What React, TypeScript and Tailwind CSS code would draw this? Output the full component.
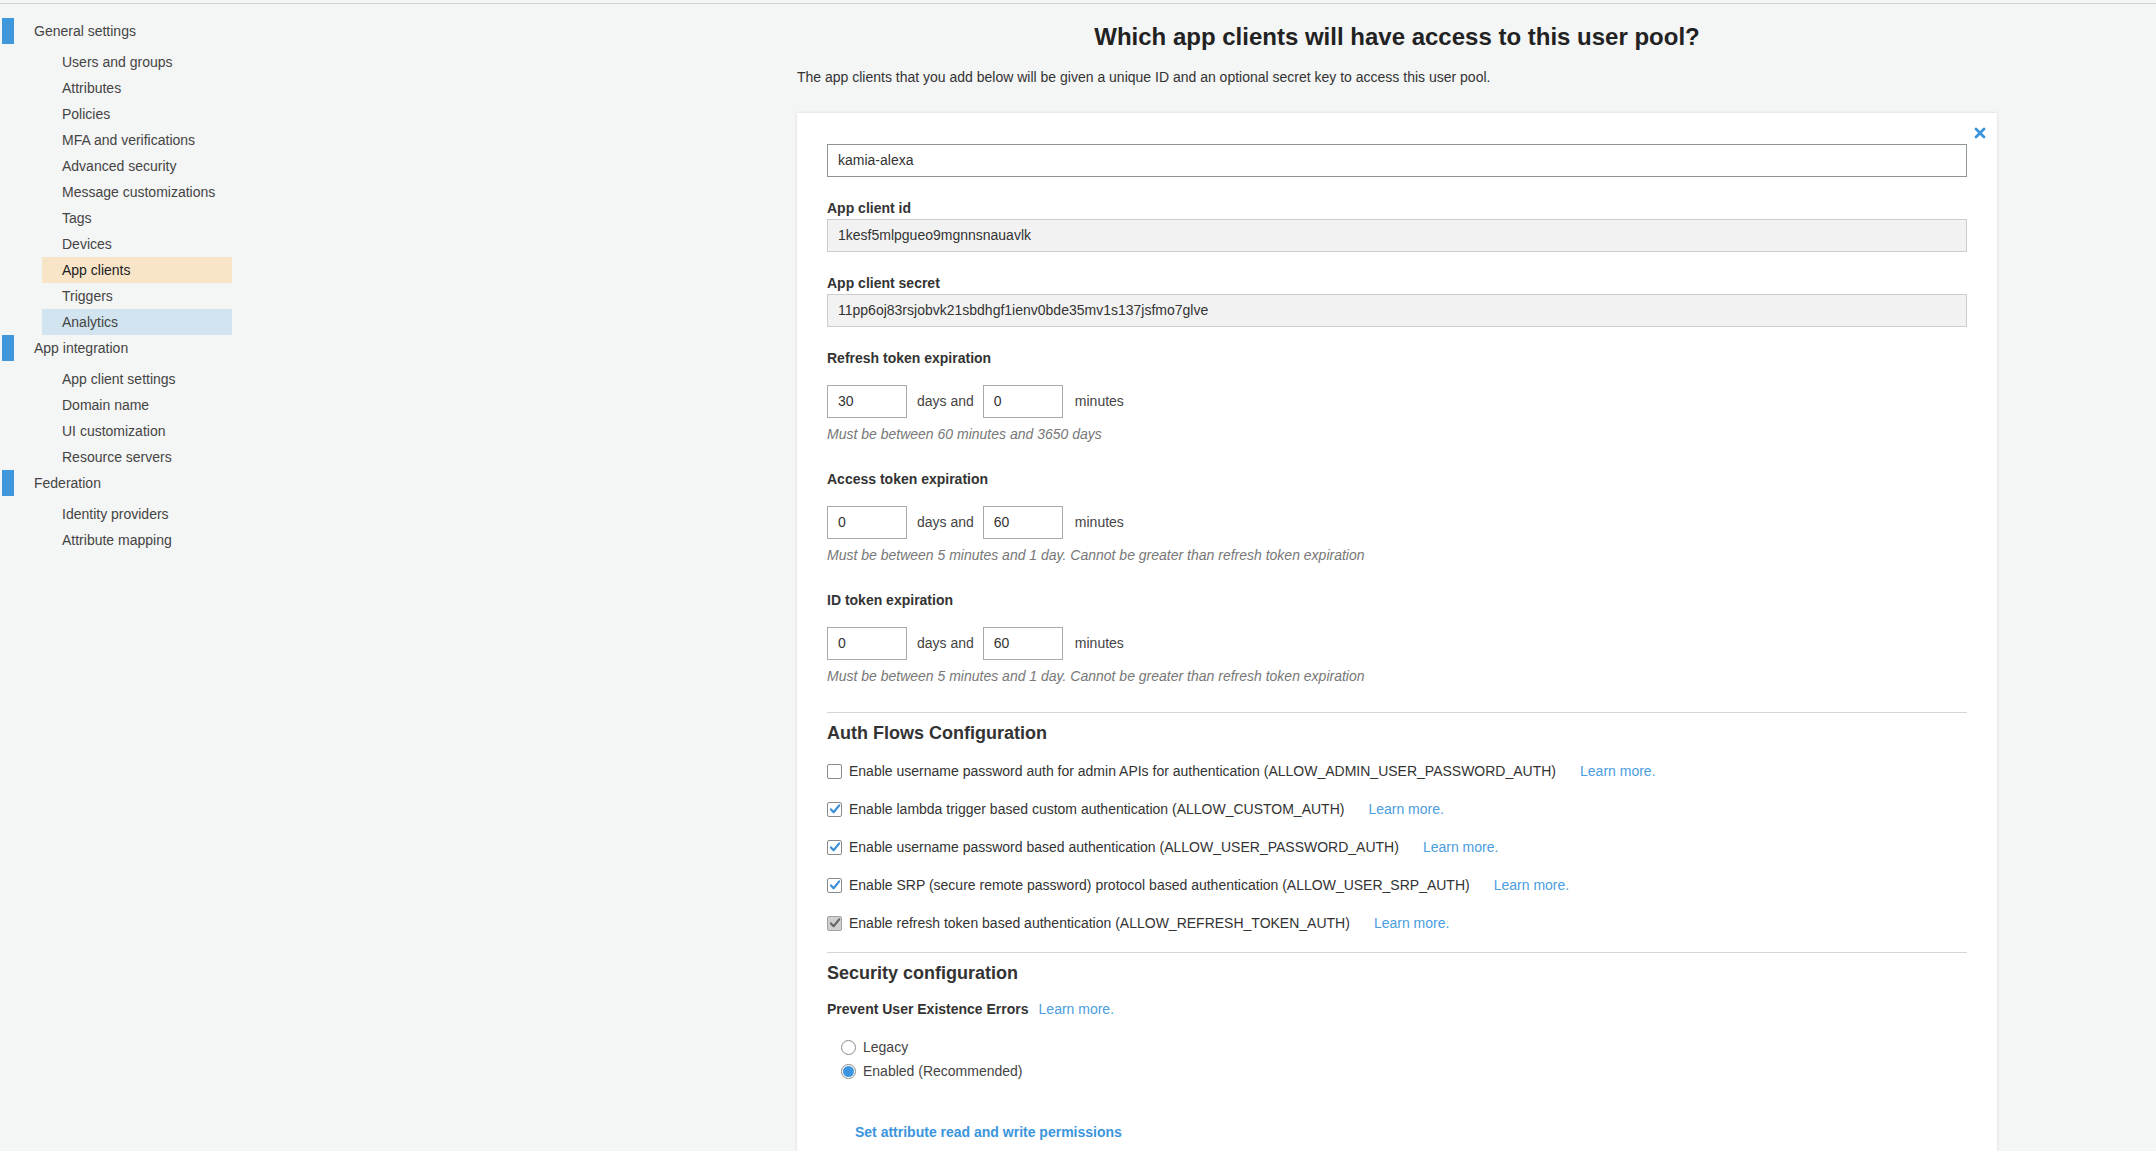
import { Fragment } from 'react'

const SIDEBAR = [
  {
    title: 'General settings',
    items: ['Users and groups', 'Attributes', 'Policies', 'MFA and verifications', 'Advanced security', 'Message customizations', 'Tags', 'Devices', 'App clients', 'Triggers', 'Analytics'],
  },
  {
    title: 'App integration',
    items: ['App client settings', 'Domain name', 'UI customization', 'Resource servers'],
  },
  {
    title: 'Federation',
    items: ['Identity providers', 'Attribute mapping'],
  },
]

const EXPIRATIONS = [
  { label: 'Refresh token expiration', days: '30', minutes: '0', help: 'Must be between 60 minutes and 3650 days' },
  { label: 'Access token expiration', days: '0', minutes: '60', help: 'Must be between 5 minutes and 1 day. Cannot be greater than refresh token expiration' },
  { label: 'ID token expiration', days: '0', minutes: '60', help: 'Must be between 5 minutes and 1 day. Cannot be greater than refresh token expiration' },
]

type FlowState = 'off' | 'on' | 'locked'

const AUTH_FLOWS: { text: string; state: FlowState }[] = [
  { text: 'Enable username password auth for admin APIs for authentication (ALLOW_ADMIN_USER_PASSWORD_AUTH)', state: 'off' },
  { text: 'Enable lambda trigger based custom authentication (ALLOW_CUSTOM_AUTH)', state: 'on' },
  { text: 'Enable username password based authentication (ALLOW_USER_PASSWORD_AUTH)', state: 'on' },
  { text: 'Enable SRP (secure remote password) protocol based authentication (ALLOW_USER_SRP_AUTH)', state: 'on' },
  { text: 'Enable refresh token based authentication (ALLOW_REFRESH_TOKEN_AUTH)', state: 'locked' },
]

function Checkbox({ state }: { state: FlowState }) {
  if (state === 'off') {
    return <span className="w-[15px] h-[15px] border border-[#8a8a8a] rounded-[2px] bg-white shrink-0" />
  }
  const locked = state === 'locked'
  return (
    <span
      className={`w-[15px] h-[15px] border rounded-[2px] shrink-0 flex items-center justify-center ${
        locked ? 'bg-[#cfcfcf] border-[#a3a3a3]' : 'bg-white border-[#8a8a8a]'
      }`}
    >
      <svg viewBox="0 0 12 12" className="w-[12px] h-[12px]">
        <path d="M2 6.4 L4.6 9.2 L10.2 2.4" fill="none" stroke={locked ? '#666' : '#3a8fd8'} strokeWidth="2.2" strokeLinecap="round" strokeLinejoin="round" />
      </svg>
    </span>
  )
}

function Radio({ checked }: { checked?: boolean }) {
  return (
    <span className="w-[15px] h-[15px] rounded-full border border-[#8a8a8a] bg-white shrink-0 flex items-center justify-center">
      {checked && <span className="w-[11px] h-[11px] rounded-full bg-[#3b95e0]" />}
    </span>
  )
}

function LearnMore() {
  return <span className="text-[#4a9de0] cursor-pointer">Learn more.</span>
}

export default function App() {
  return (
    <div className="min-h-screen bg-[#f4f5f5] font-['Liberation_Sans',Arial,sans-serif] text-[14px] text-[#333]">
      <div className="h-[3px]" />
      <div className="border-t border-[#d3d5d5] flex">
        {/* Sidebar */}
        <nav className="w-[240px] shrink-0 pt-[14px] text-[#444]">
          {SIDEBAR.map((group) => (
            <Fragment key={group.title}>
              <div className="flex items-center h-[26px] mb-[5px]">
                <span className="ml-[2px] w-[12px] h-full bg-[#3f98db]" />
                <span className="ml-[20px]">{group.title}</span>
              </div>
              {group.items.map((item) => (
                <div
                  key={item}
                  className={`ml-[42px] w-[190px] h-[26px] pl-[20px] flex items-center ${
                    item === 'App clients' ? 'bg-[#f8e5c8] text-[#222]' : item === 'Analytics' ? 'bg-[#d2e4ef]' : ''
                  }`}
                >
                  {item}
                </div>
              ))}
            </Fragment>
          ))}
        </nav>

        {/* Main */}
        <main className="ml-[557px] w-[1200px] shrink-0">
          <h1 className="mt-[19px] text-center text-[24px] leading-[28px] font-bold text-[#222]">
            Which app clients will have access to this user pool?
          </h1>
          <p className="mt-[16px] leading-[20px] text-[#333]">
            The app clients that you add below will be given a unique ID and an optional secret key to access this user pool.
          </p>

          <div className="relative mt-[26px] bg-white shadow-[0_0_3px_rgba(0,0,0,0.12)] px-[30px] pt-[31px] pb-[40px]">
            <button className="absolute top-[13px] right-[10px] w-[14px] h-[14px] flex items-center justify-center">
              <svg viewBox="0 0 12 12" className="w-[12px] h-[12px]">
                <path d="M2 2 L10 10 M10 2 L2 10" stroke="#3b95dc" strokeWidth="2.8" strokeLinecap="round" />
              </svg>
            </button>

            <div className="h-[33px] border border-[#8d9596] pl-[10px] flex items-center">kamia-alexa</div>

            <div className="mt-[21px] font-bold leading-[20px] mb-px">App client id</div>
            <div className="h-[33px] border border-[#cccccc] bg-[#f2f2f2] pl-[10px] flex items-center">1kesf5mlpgueo9mgnnsnauavlk</div>

            <div className="mt-[21px] font-bold leading-[20px] mb-px">App client secret</div>
            <div className="h-[33px] border border-[#cccccc] bg-[#f2f2f2] pl-[10px] flex items-center">
              11pp6oj83rsjobvk21sbdhgf1ienv0bde35mv1s137jsfmo7glve
            </div>

            {EXPIRATIONS.map((exp, i) => (
              <div key={exp.label} className={i === 0 ? 'mt-[21px]' : 'mt-[25px]'}>
                <div className="font-bold leading-[20px]">{exp.label}</div>
                <div className="mt-[17px] flex items-center">
                  <div className="w-[80px] h-[33px] border border-[#aaaaaa] pl-[10px] flex items-center">{exp.days}</div>
                  <span className="ml-[10px] mr-[9px] text-[#444]">days and</span>
                  <div className="w-[80px] h-[33px] border border-[#aaaaaa] pl-[10px] flex items-center">{exp.minutes}</div>
                  <span className="ml-[12px] text-[#444]">minutes</span>
                </div>
                <div className="mt-[6px] leading-[20px] italic text-[#777]">{exp.help}</div>
              </div>
            ))}

            <div className="mt-[26px] border-t border-[#d5d5d5]" />
            <h2 className="mt-[8px] text-[18px] leading-[24px] font-bold text-[#333]">Auth Flows Configuration</h2>
            <div className="mt-[16px] flex flex-col gap-[18px]">
              {AUTH_FLOWS.map((flow) => (
                <div key={flow.text} className="h-[20px] flex items-center">
                  <Checkbox state={flow.state} />
                  <span className="ml-[7px] text-[#333]">{flow.text}</span>
                  <span className="ml-[24px]">
                    <LearnMore />
                  </span>
                </div>
              ))}
            </div>

            <div className="mt-[19px] border-t border-[#d5d5d5]" />
            <h2 className="mt-[8px] text-[18px] leading-[24px] font-bold text-[#333]">Security configuration</h2>
            <div className="mt-[14px] leading-[20px] flex items-center">
              <span className="font-bold">Prevent User Existence Errors</span>
              <span className="ml-[10px]">
                <LearnMore />
              </span>
            </div>
            <div className="mt-[18px] pl-[14px] flex flex-col gap-[4px]">
              <label className="h-[20px] flex items-center gap-[7px] text-[#444]">
                <Radio />
                Legacy
              </label>
              <label className="h-[20px] flex items-center gap-[7px] text-[#444]">
                <Radio checked />
                Enabled (Recommended)
              </label>
            </div>

            <div className="mt-[41px] pl-[28px] leading-[20px] font-bold text-[#3b95dc]">Set attribute read and write permissions</div>
          </div>
        </main>
      </div>
    </div>
  )
}
